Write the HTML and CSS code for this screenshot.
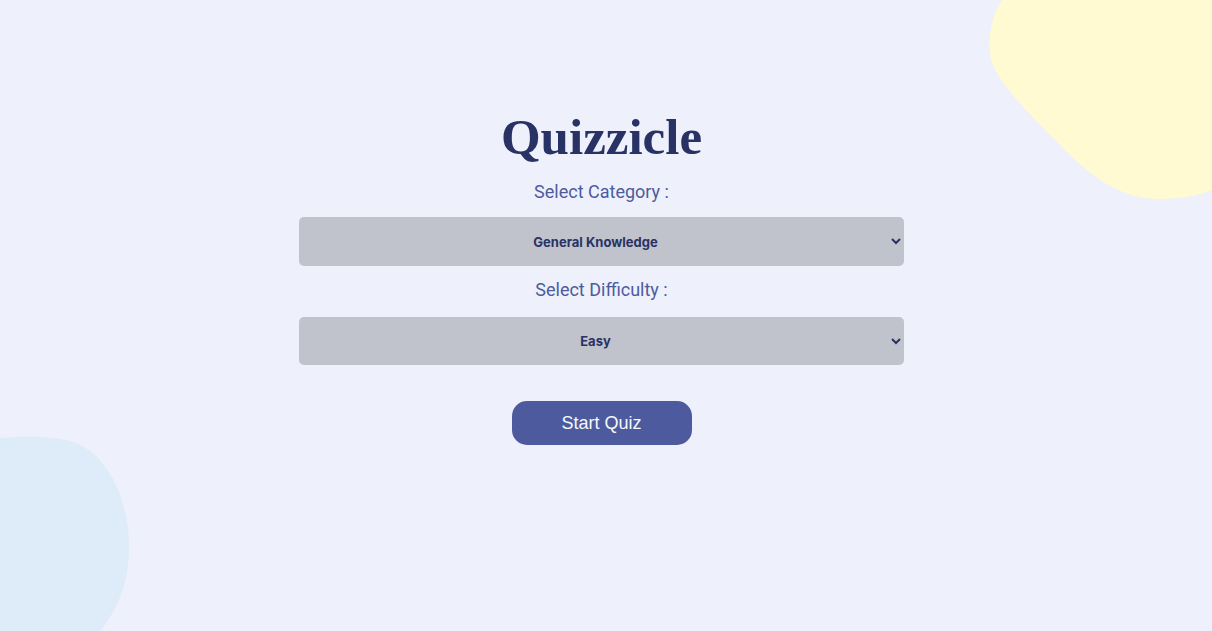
FILE: index.html
```html
<!DOCTYPE html>
<html lang="en">
<head>
<meta charset="utf-8">
<title>Quizzicle</title>
<link rel="stylesheet" href="styles.css">
</head>
<body>
<svg class="blob blob-yellow" width="224" height="200" viewBox="0 0 224 200" aria-hidden="true">
  <path d="M14 0 C 4 15, 0 35, 2 55 C 6 80, 40 112, 72 145 C 102 176, 132 199, 172 199 C 192 199, 212 195, 224 190 L224 0 Z" fill="#FFFAD1"/>
</svg>
<svg class="blob blob-blue" width="132" height="195" viewBox="0 0 132 195" aria-hidden="true">
  <path d="M0 2 C 30 0, 62 -1, 82 10 C 112 26, 129 70, 129 110 C 129 150, 116 175, 100 195 L 0 195 Z" fill="#DEEBF8"/>
</svg>
<main class="start">
  <h1 class="title">Quizzicle</h1>
  <label class="field-label" for="category">Select Category :</label>
  <select id="category" class="field-select">
    <option>General Knowledge</option>
    <option>Books</option>
    <option>Film</option>
  </select>
  <label class="field-label field-label-second" for="difficulty">Select Difficulty :</label>
  <select id="difficulty" class="field-select field-select-short">
    <option>Easy</option>
    <option>Medium</option>
    <option>Hard</option>
  </select>
  <button class="start-btn" type="button">Start Quiz</button>
</main>
</body>
</html>
```

FILE: styles.css
```css
html, body {
  margin: 0;
  padding: 0;
}

body {
  background: #EEF0FB;
  min-height: 631px;
  overflow: hidden;
  position: relative;
  font-family: Roboto, Inter, "Liberation Sans", sans-serif;
}

.blob {
  position: absolute;
  display: block;
}

.blob-yellow {
  top: 0;
  right: 0;
}

.blob-blue {
  left: 0;
  top: 436px;
}

.start {
  position: relative;
  display: flex;
  flex-direction: column;
  align-items: center;
  padding-top: 107px;
  padding-right: 9px;
}

.title {
  margin: 0;
  font-family: "Liberation Serif", "Times New Roman", serif;
  font-weight: 700;
  font-size: 51px;
  line-height: 60px;
  color: #293264;
}

.field-label {
  display: block;
  margin: 13px 0 13px;
  font-family: Roboto, Inter, sans-serif;
  font-size: 18px;
  line-height: 24px;
  color: #4D5B9E;
}

.field-label-second {
  margin-top: 12px;
  margin-bottom: 15px;
}

.field-select {
  width: 605px;
  height: 49px;
  margin: 0;
  border: none;
  border-radius: 5px;
  background-color: #C0C2CC;
  color: #293264;
  font-family: Inter, Roboto, sans-serif;
  font-weight: 700;
  font-size: 13px;
  text-align: center;
  text-align-last: center;
  padding: 0 8px;
}

.field-select-short {
  height: 48px;
}

.start-btn {
  margin-top: 36px;
  width: 180px;
  height: 44px;
  border: none;
  border-radius: 15px;
  background: #4D5B9E;
  color: #F5F7FB;
  font-family: "Liberation Sans", Arial, sans-serif;
  font-size: 18px;
}
```
